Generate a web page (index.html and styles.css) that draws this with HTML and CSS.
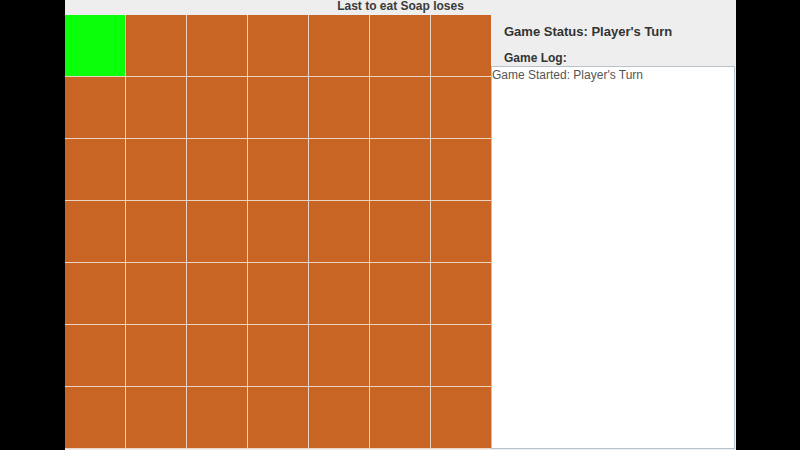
FILE: index.html
```
<!DOCTYPE html>
<html>
<head>
<meta charset="utf-8">
<link rel="stylesheet" href="styles.css">
</head>
<body>
<div class="window">
  <div class="title">Last to eat Soap loses</div>
  <div class="main">
    <div class="board">
      <div class="cell soap"></div><div class="cell"></div><div class="cell"></div><div class="cell"></div><div class="cell"></div><div class="cell"></div><div class="cell"></div>
      <div class="cell"></div><div class="cell"></div><div class="cell"></div><div class="cell"></div><div class="cell"></div><div class="cell"></div><div class="cell"></div>
      <div class="cell"></div><div class="cell"></div><div class="cell"></div><div class="cell"></div><div class="cell"></div><div class="cell"></div><div class="cell"></div>
      <div class="cell"></div><div class="cell"></div><div class="cell"></div><div class="cell"></div><div class="cell"></div><div class="cell"></div><div class="cell"></div>
      <div class="cell"></div><div class="cell"></div><div class="cell"></div><div class="cell"></div><div class="cell"></div><div class="cell"></div><div class="cell"></div>
      <div class="cell"></div><div class="cell"></div><div class="cell"></div><div class="cell"></div><div class="cell"></div><div class="cell"></div><div class="cell"></div>
      <div class="cell"></div><div class="cell"></div><div class="cell"></div><div class="cell"></div><div class="cell"></div><div class="cell"></div><div class="cell"></div>
    </div>
    <div class="side">
      <div class="status">Game Status: Player's Turn</div>
      <div class="loglabel">Game Log:</div>
      <div class="log">Game Started: Player's Turn</div>
    </div>
  </div>
</div>
</body>
</html>
```
FILE: styles.css
```
html, body {
  margin: 0;
  padding: 0;
  background: #000;
  width: 800px;
  height: 450px;
  overflow: hidden;
  font-family: "Liberation Sans", Arial, sans-serif;
}
.window {
  margin-left: 65px;
  width: 671px;
  height: 450px;
  background: #eeeeee;
  display: flex;
  flex-direction: column;
}
.title {
  height: 15px;
  line-height: 13px;
  text-align: center;
  font-size: 12px;
  font-weight: bold;
  color: #3a3a3a;
}
.main {
  display: flex;
  flex: 1;
}
.board {
  display: grid;
  grid-template-columns: repeat(7, 60px);
  grid-template-rows: repeat(7, 61px);
  gap: 1px;
  background: #ecd4c4;
  padding-bottom: 1px;
  align-self: flex-start;
}
.cell {
  background: #c86424;
}
.cell.soap {
  background: #0aff0a;
}
.side {
  flex: 1;
  display: flex;
  flex-direction: column;
  padding-top: 8px;
  padding-right: 1px;
}
.status {
  padding-left: 13px;
  font-size: 13px;
  font-weight: bold;
  color: #333;
  height: 17px;
  line-height: 17px;
}
.loglabel {
  padding-left: 13px;
  margin-top: 11px;
  font-size: 12px;
  font-weight: bold;
  color: #333;
  height: 15px;
  line-height: 15px;
}
.log {
  flex: 1;
  margin-bottom: 1px;
  background: #fff;
  border: 1px solid #b8c2ca;
  font-size: 12px;
  color: #555;
  line-height: 16px;
  padding-left: 0;
}
```
